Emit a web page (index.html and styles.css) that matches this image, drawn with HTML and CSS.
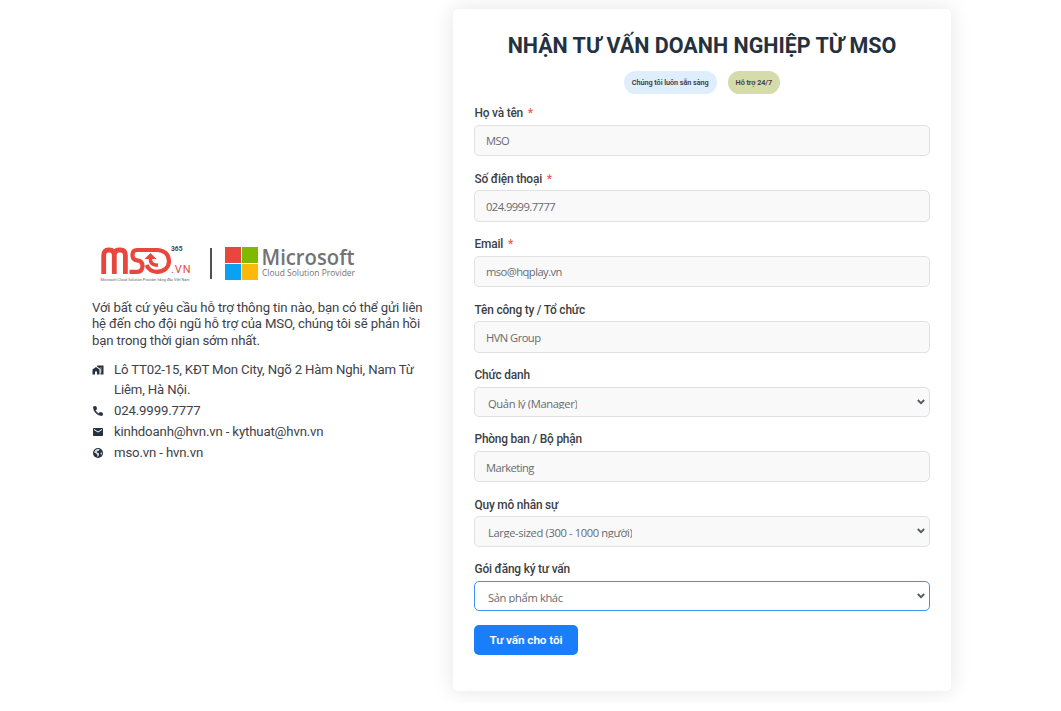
FILE: index.html
```
<!DOCTYPE html>
<html lang="vi">
<head>
<meta charset="utf-8">
<title>Nhận tư vấn doanh nghiệp từ MSO</title>
<link rel="stylesheet" href="styles.css">
</head>
<body>
<main class="page">
  <section class="info">
    <svg class="logos" width="270" height="44" viewBox="0 0 270 44">
      <g fill="none" stroke="#e8473d">
        <path stroke-width="4.800" d="M11.700 34V15.500Q11.700 10 16.500 10H17.500Q22.300 10 22.300 15.500V34M22.300 15.500Q22.300 10 27 10H28.500Q33.400 10 33.400 15.500V34"/>
        <path stroke-width="4.200" d="M66 10H45Q40.500 10 40.500 15Q40.500 20 45 20.300Q50.500 20.800 50.500 26Q50.500 31.800 45 31.800H37.500"/>
        <path stroke-width="4.200" d="M65 10C72 10 77 14.500 77 21S72 31.800 65 31.800C60 31.800 56.500 29.500 54.500 25"/>
        <path stroke-width="3.600" d="M58.500 17V20Q58.500 25 66 25.300"/>
      </g>
      <path fill="#e8473d" d="M52.500 19L58.500 13L64.500 19z"/>
      <text class="logo-vn" x="79" y="33" textLength="19.500">.VN</text>
      <text class="logo-365" x="79" y="10.500" textLength="11.500" lengthAdjust="spacingAndGlyphs">365</text>
      <text class="logo-tag" x="8.500" y="40.800" textLength="89" lengthAdjust="spacingAndGlyphs">Microsoft Cloud Solution Provider hàng đầu Việt Nam</text>
      <path fill="#50505a" d="M118 8h2v31h-2z"/>
      <path fill="#e8473d" d="M133 7h16v16h-16z"/>
      <path fill="#7fba00" d="M150 7h16v16h-16z"/>
      <path fill="#0aa1f2" d="M133 24h16v16h-16z"/>
      <path fill="#fdb909" d="M150 24h16v16h-16z"/>
      <text class="logo-ms" x="169.500" y="24.500" textLength="93" lengthAdjust="spacingAndGlyphs">Microsoft</text>
      <text class="logo-csp" x="170" y="36" textLength="93" lengthAdjust="spacingAndGlyphs">Cloud Solution Provider</text>
    </svg>
    <p class="intro">Với bất cứ yêu cầu hỗ trợ thông tin nào, bạn có thể gửi liên<br>hệ đến cho đội ngũ hỗ trợ của MSO, chúng tôi sẽ phản hồi<br>bạn trong thời gian sớm nhất.</p>
    <ul class="contacts">
      <li><svg class="icon" viewBox="0 0 24 24"><path d="M1 11v10h5v-6h4v6h5V11L8 6zM10 3v1.970l7 5V11h2v2h-2v2h2v2h-2v4h6V3zm9 6h-2V7h2z"/></svg><span>Lô TT02-15, KĐT Mon City, Ngõ 2 Hàm Nghi, Nam Từ<br>Liêm, Hà Nội.</span></li>
      <li><svg class="icon" viewBox="0 0 24 24"><path class="bold" d="M6.620 10.790c1.440 2.830 3.760 5.140 6.590 6.590l2.200-2.200c.27-.27.67-.36 1.020-.24 1.120.37 2.330.57 3.570.57.55 0 1 .45 1 1V20c0 .55-.45 1-1 1-9.390 0-17-7.610-17-17 0-.55.45-1 1-1h3.500c.55 0 1 .45 1 1 0 1.250.2 2.450.57 3.570.11.35.03.74-.25 1.020z"/></svg><span>024.9999.7777</span></li>
      <li><svg class="icon" viewBox="0 0 24 24"><path d="M20 4H4c-1.100 0-2 .9-2 2v12c0 1.100.9 2 2 2h16c1.100 0 2-.9 2-2V6c0-1.100-.9-2-2-2zm0 4l-8 5-8-5V6l8 5 8-5z"/></svg><span>kinhdoanh@hvn.vn - kythuat@hvn.vn</span></li>
      <li><svg class="icon" viewBox="0 0 24 24"><circle cx="12" cy="12" r="10"/><path class="land" d="M11 3.500L15 4.500V6L13 8L10 8.500V11L14 12.500V16.500L11.500 20L10.500 19V15.500L8 13L4 10.500Q6 5 11 3.500zM18 10L20.500 12.500L18.500 16L17 13z"/></svg><span>mso.vn - hvn.vn</span></li>
    </ul>
  </section>

  <form class="card">
    <h1 class="title">NHẬN TƯ VẤN DOANH NGHIỆP TỪ MSO</h1>
    <div class="badges"><span class="badge badge-blue">Chúng tôi luôn sẵn sàng</span><span class="badge badge-green">Hỗ trợ 24/7</span></div>
    <div class="field"><label class="label">Họ và tên <i class="req">*</i></label><div class="input"><span>MSO</span></div></div>
    <div class="field"><label class="label">Số điện thoại <i class="req">*</i></label><div class="input"><span>024.9999.7777</span></div></div>
    <div class="field"><label class="label">Email <i class="req">*</i></label><div class="input"><span>mso@hqplay.vn</span></div></div>
    <div class="field"><label class="label">Tên công ty / Tổ chức</label><div class="input"><span>HVN Group</span></div></div>
    <div class="field"><label class="label">Chức danh</label><div class="input select"><span>Quản lý (Manager)</span><svg class="chevron" viewBox="0 0 8 6"><path d="M.8 1L4 4.200 7.200 1"/></svg></div></div>
    <div class="field"><label class="label">Phòng ban / Bộ phận</label><div class="input"><span>Marketing</span></div></div>
    <div class="field"><label class="label">Quy mô nhân sự</label><div class="input select"><span>Large-sized (300 - 1000 người)</span><svg class="chevron" viewBox="0 0 8 6"><path d="M.8 1L4 4.200 7.200 1"/></svg></div></div>
    <div class="field"><label class="label">Gói đăng ký tư vấn</label><div class="input select focused"><span>Sản phẩm khác</span><svg class="chevron" viewBox="0 0 8 6"><path d="M.8 1L4 4.200 7.200 1"/></svg></div></div>
    <button class="submit" type="button">Tư vấn cho tôi</button>
  </form>
</main>
</body>
</html>
```

FILE: styles.css
```
* { box-sizing: border-box; }
body { margin: 0; background: #fff; font-family: Roboto, sans-serif; }
.page { display: flex; align-items: flex-start; height: 703px; padding: 9px 0 0 92px; overflow: hidden; }
.info { width: 361px; padding-top: 231px; color: #3f4147; }
.logos { display: block; }
.logo-vn { font: 400 11px Roboto, sans-serif; fill: #e8473d; }
.logo-365 { font: 700 6.5px Roboto, sans-serif; fill: #44444c; }
.logo-tag { font: 4px Roboto, sans-serif; fill: #66666c; }
.logo-ms { font: 600 21.5px "Open Sans", sans-serif; fill: #737373; }
.logo-csp { font: 9px "Open Sans", sans-serif; fill: #737373; }
.intro { margin: 16px 0 0; font-size: 13.2px; letter-spacing: -.14px; line-height: 16.4px; white-space: nowrap; }
.contacts { margin: 10.5px 0 0; padding: 0; list-style: none; font-size: 13.2px; letter-spacing: -.15px; line-height: 20.7px; white-space: nowrap; }
.contacts li { display: flex; gap: 10px; }
.icon { flex: none; width: 12px; height: 12px; margin-top: 4px; fill: #243140; }
.bold { stroke: #243140; stroke-width: 1.5; }
.land { fill: #fff; fill-opacity: .8; }
.card { width: 498px; height: 682px; padding: 23px 21px 0; background: #fff; border-radius: 5px; box-shadow: 0 0 21px rgba(0, 0, 0, .11); }
.title { margin: 0; text-align: center; font-size: 21.5px; line-height: 28px; font-weight: 700; color: #243140; white-space: nowrap; }
.badges { display: flex; justify-content: center; gap: 11px; margin-top: 11px; margin-bottom: 9px; }
.badge { height: 23px; padding: 0 8px; border-radius: 12px; font-size: 7.3px; letter-spacing: -.08px; line-height: 23.5px; font-weight: 600; color: #3c3c46; white-space: nowrap; }
.badge-blue { background: #dfeefc; }
.badge-green { background: #d5dbaa; }
.field { margin-bottom: 12.5px; }
.label { display: block; height: 20px; margin-bottom: 1.5px; padding-left: .5px; font-size: 11.9px; letter-spacing: -.19px; line-height: 21px; font-weight: 500; color: #3c3f45; }
.req { margin-left: 2px; font-style: normal; color: #f05b50; }
.input { display: flex; align-items: center; height: 31.5px; padding: 2px 12px 0 11px; border: 1px solid #dfe1e2; border-radius: 5px; background: #f9f9f9; font: 11.2px/16px "Open Sans", sans-serif; color: #686b6f; }
.input span { letter-spacing: -.55px; }
.select { justify-content: space-between; height: 30.3px; padding: 0 4px 0 13px; }
.select span { height: 13px; margin-top: 1px; line-height: 16px; overflow: hidden; letter-spacing: -.38px; }
.focused { border-color: #3f93f5; background: #fff; }
.chevron { width: 8px; height: 6px; fill: none; stroke: #55585c; stroke-width: 1.8; }
.submit { display: block; width: 104px; height: 30px; margin-top: 14px; padding: 0; border: 0; border-radius: 5px; background: #1a7efb; color: #fff; font: 600 11.8px/28px Roboto, sans-serif; letter-spacing: -.1px; }
```
